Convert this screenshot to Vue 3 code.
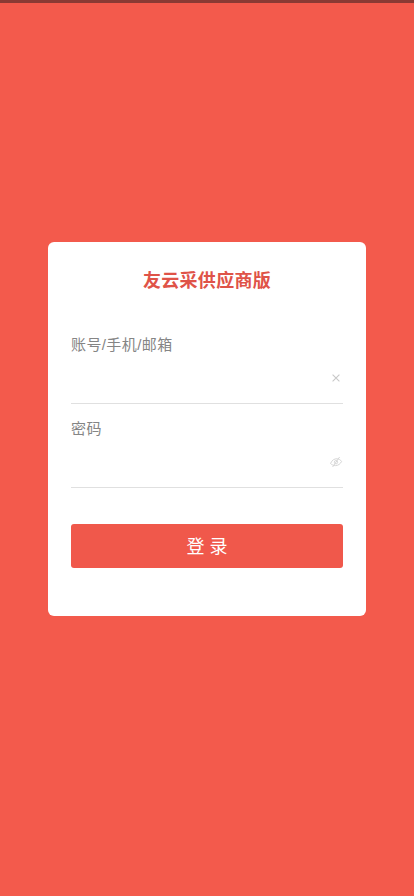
<template>
  <div class="page">
    <div class="top-line"></div>
    <div class="card">
      <h1 class="title">友云采供应商版</h1>
      <div class="field">
        <label class="label">账号/手机/邮箱</label>
        <div class="input-row">
          <input class="input" type="text" v-model="account" />
          <svg class="icon" viewBox="0 0 12 12" width="12" height="12">
            <path d="M2.6 2.6 L9.4 9.4 M9.4 2.6 L2.6 9.4" stroke="#c8c8c8" stroke-width="1.1" fill="none" />
          </svg>
        </div>
      </div>
      <div class="field">
        <label class="label">密码</label>
        <div class="input-row">
          <input class="input" type="password" v-model="password" />
          <svg class="icon eye" viewBox="0 0 14 12" width="14" height="12">
            <path d="M1.5 7.5 C3 4 5.5 2.6 8 2.8 C10 3 11.6 4 12.6 5.4 C11.4 8 9 9.6 6.6 9.6 C4.6 9.6 2.8 8.8 1.5 7.5 Z" stroke="#d6d6d6" stroke-width="1" fill="none" />
            <circle cx="7" cy="6.2" r="1.7" stroke="#d6d6d6" stroke-width="0.9" fill="none" />
            <path d="M3.6 11 L10.6 1" stroke="#d6d6d6" stroke-width="1" fill="none" />
          </svg>
        </div>
      </div>
      <button class="login" type="button">登 录</button>
    </div>
  </div>
</template>

<script setup>
import { ref } from 'vue';

const account = ref('');
const password = ref('');
</script>

<style>
html,
body {
  margin: 0;
  background: #f35a4c;
}
</style>

<style scoped>
.page {
  width: 414px;
  height: 896px;
  box-sizing: border-box;
  background: #f35a4c;
  font-family: "Liberation Sans", "Noto Sans CJK SC", sans-serif;
  display: flex;
  flex-direction: column;
}

.top-line {
  height: 3px;
  margin-bottom: 239px;
  background: #8a3a34;
}

.card {
  width: 318px;
  height: 374px;
  margin-left: 48px;
  box-sizing: border-box;
  padding: 26px 23px 0;
  background: #fff;
  border-radius: 6px;
}

.title {
  margin: 0 0 39px;
  font-size: 18px;
  line-height: 26px;
  font-weight: 700;
  letter-spacing: 0.3px;
  text-align: center;
  color: #df5348;
}

.field {
  height: 84px;
  display: flex;
  flex-direction: column;
}

.label {
  font-size: 15px;
  line-height: 24px;
  letter-spacing: 0.4px;
  color: #858585;
}

.input-row {
  height: 42px;
  display: flex;
  align-items: center;
  padding-bottom: 4px;
  border-bottom: 1px solid #e0e0e0;
}

.input {
  flex: 1;
  min-width: 0;
  height: 30px;
  border: 0;
  outline: 0;
  padding: 0;
  background: transparent;
  font-size: 15px;
}

.icon {
  display: block;
  margin-right: 1px;
}

.eye {
  margin-right: 0;
}

.login {
  display: block;
  width: 100%;
  height: 44px;
  margin-top: 23px;
  padding: 0 0 3px;
  border: 0;
  border-radius: 3px;
  background: #f0584b;
  color: #fff;
  font-family: inherit;
  font-size: 18px;
}
</style>
